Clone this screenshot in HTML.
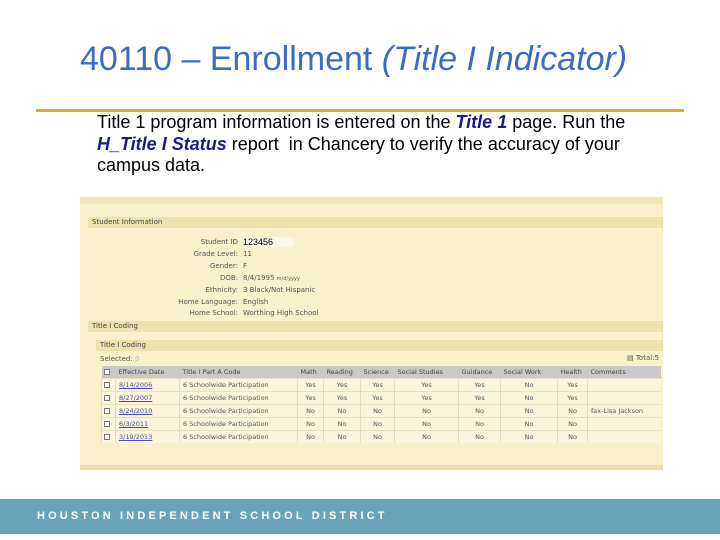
<!DOCTYPE html>
<html><head><style>
*{margin:0;padding:0;box-sizing:border-box}
body{width:720px;height:540px;background:#fff;position:relative;overflow:hidden;font-family:"Liberation Sans",Arial,Helvetica,sans-serif}
.a{position:absolute;white-space:nowrap}
h1{position:absolute;left:80px;top:40px;font-family:"Liberation Sans",Arial,sans-serif;font-size:34px;line-height:38px;font-weight:normal;color:#3c6cc0;white-space:nowrap}
.p{position:absolute;left:97px;top:112px;font-family:"Liberation Sans",Arial,sans-serif;font-size:18px;line-height:21.5px;color:#000;white-space:nowrap}
.p b{color:#1a1a8c;font-style:italic}
.s{position:absolute;left:80px;top:197px;width:583px;height:273px;background:#f8f1cc;font-family:"DejaVu Sans",sans-serif;font-size:7px;color:#555;overflow:hidden}
.hd{position:absolute;left:8px;width:575px;height:11px;background:#ece2ad;padding-left:4px;line-height:11px;color:#444}
.l{position:absolute;width:158px;text-align:right;color:#555}
.v{position:absolute;left:163px;color:#555}
table{position:absolute;left:21px;top:169px;width:560px;border-collapse:collapse;font-size:6.5px}
th{background:#c9c9c6;font-weight:normal;height:12px;text-align:left;padding-left:3px;color:#444}
td{background:#fbf5dc;height:13px;border-top:1px solid #e8e0c0;border-left:1px solid #e6ddbd;padding-left:3px;color:#555}
td.c{text-align:center;padding:0}
a{color:#4a4ab0;text-decoration:underline}
.cb{display:inline-block;width:6px;height:6px;border:1px solid #777;background:#fff;vertical-align:middle}
.ft{position:absolute;left:0;top:499px;width:720px;height:35px;background:#69a3bc}
.ft span{position:absolute;left:37px;top:11px;color:#fff;font-weight:bold;font-size:11px;letter-spacing:3.15px;font-family:"Liberation Sans",Arial,sans-serif}
</style></head><body>
<h1>40110 – Enrollment <i>(Title I Indicator)</i></h1>
<div class="a" style="left:36px;top:109px;width:648px;height:3px;background:#d3ae35"></div>
<div class="p">Title 1 program information is entered on the <b>Title 1</b> page. Run the<br><b>H_Title I Status</b> report&nbsp; in Chancery to verify the accuracy of your<br>campus data.</div>
<div class="s">
<div class="a" style="left:0;top:0;width:583px;height:7px;background:#efe6b8"></div>
<div class="hd" style="top:20px">Student Information</div>
<div class="l" style="top:41px">Student ID</div><div class="v" style="top:40px;color:#000;font-family:'Liberation Sans',Arial,sans-serif;font-size:9px;background:#fcf8e6;width:50px">123456</div>
<div class="l" style="top:53px">Grade Level:</div><div class="v" style="top:53px">11</div>
<div class="l" style="top:65px">Gender:</div><div class="v" style="top:65px">F</div>
<div class="l" style="top:77px">DOB:</div><div class="v" style="top:77px">8/4/1995 <span style="font-size:5px">m/d/yyyy</span></div>
<div class="l" style="top:89px">Ethnicity:</div><div class="v" style="top:89px">3 Black/Not Hispanic</div>
<div class="l" style="top:101px">Home Language:</div><div class="v" style="top:101px">English</div>
<div class="l" style="top:112px">Home School:</div><div class="v" style="top:112px">Worthing High School</div>
<div class="hd" style="top:124px">Title I Coding</div>
<div class="hd" style="top:143px;left:16px;width:567px">Title I Coding</div>
<div class="a" style="left:20px;top:158px">Selected: <span style="color:#bbb">0</span></div>
<div class="a" style="left:547px;top:157px">▤ Total:5</div>
<table>
<tr><th style="width:14px;padding-left:2px"><span class="cb"></span></th><th style="width:64px">Effective Date</th><th style="width:118px">Title I Part A Code</th><th style="width:26px">Math</th><th style="width:37px">Reading</th><th style="width:34px">Science</th><th style="width:64px">Social Studies</th><th style="width:42px">Guidance</th><th style="width:57px">Social Work</th><th style="width:30px">Health</th><th>Comments</th></tr>
<tr><td style="padding-left:2px"><span class="cb"></span></td><td><a>8/14/2006</a></td><td>6 Schoolwide Participation</td><td class="c">Yes</td><td class="c">Yes</td><td class="c">Yes</td><td class="c">Yes</td><td class="c">Yes</td><td class="c">No</td><td class="c">Yes</td><td></td></tr>
<tr><td style="padding-left:2px"><span class="cb"></span></td><td><a>8/27/2007</a></td><td>6 Schoolwide Participation</td><td class="c">Yes</td><td class="c">Yes</td><td class="c">Yes</td><td class="c">Yes</td><td class="c">Yes</td><td class="c">No</td><td class="c">Yes</td><td></td></tr>
<tr><td style="padding-left:2px"><span class="cb"></span></td><td><a>8/24/2010</a></td><td>6 Schoolwide Participation</td><td class="c">No</td><td class="c">No</td><td class="c">No</td><td class="c">No</td><td class="c">No</td><td class="c">No</td><td class="c">No</td><td>fax-Lisa Jackson</td></tr>
<tr><td style="padding-left:2px"><span class="cb"></span></td><td><a>6/3/2011</a></td><td>6 Schoolwide Participation</td><td class="c">No</td><td class="c">No</td><td class="c">No</td><td class="c">No</td><td class="c">No</td><td class="c">No</td><td class="c">No</td><td></td></tr>
<tr><td style="padding-left:2px"><span class="cb"></span></td><td><a>3/19/2013</a></td><td>6 Schoolwide Participation</td><td class="c">No</td><td class="c">No</td><td class="c">No</td><td class="c">No</td><td class="c">No</td><td class="c">No</td><td class="c">No</td><td></td></tr>
</table>
<div class="a" style="left:0;top:268px;width:583px;height:5px;background:#e8dfa8"></div>
</div>
<div class="ft"><span>HOUSTON INDEPENDENT SCHOOL DISTRICT</span></div>
</body></html>
